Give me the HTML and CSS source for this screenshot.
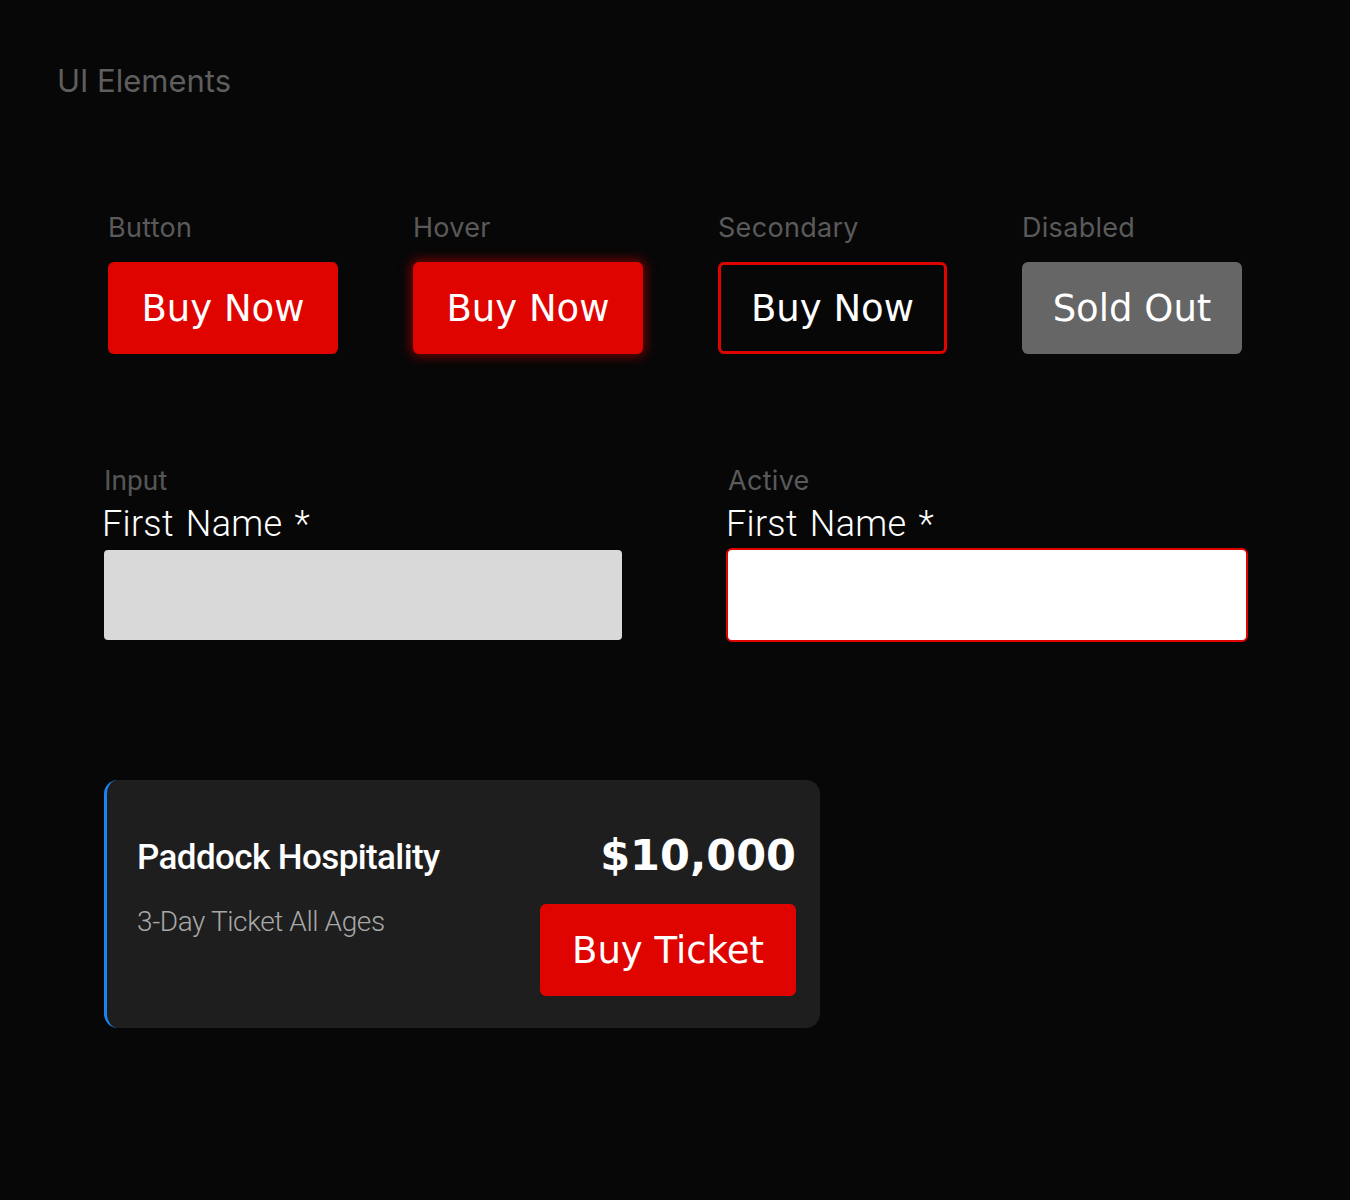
FILE: index.html
```html
<!DOCTYPE html>
<html lang="en">
<head>
<meta charset="utf-8">
<title>UI Elements</title>
<link rel="stylesheet" href="styles.css">
</head>
<body>
<main class="page">
  <h1 class="title">UI Elements</h1>

  <section class="buttons">
    <div class="btn-col">
      <span class="label">Button</span>
      <button class="btn btn-primary">Buy Now</button>
    </div>
    <div class="btn-col">
      <span class="label">Hover</span>
      <button class="btn btn-primary btn-hover">Buy Now</button>
    </div>
    <div class="btn-col">
      <span class="label">Secondary</span>
      <button class="btn btn-secondary">Buy Now</button>
    </div>
    <div class="btn-col">
      <span class="label">Disabled</span>
      <button class="btn btn-disabled">Sold Out</button>
    </div>
  </section>

  <section class="inputs">
    <div class="field">
      <span class="label label-alt">Input</span>
      <span class="field-name">First Name *</span>
      <div class="input-box"></div>
    </div>
    <div class="field">
      <span class="label label-active">Active</span>
      <span class="field-name">First Name *</span>
      <div class="input-box input-active"></div>
    </div>
  </section>

  <section class="card">
    <div class="card-info">
      <div class="card-title">Paddock Hospitality</div>
      <div class="card-sub">3-Day Ticket All Ages</div>
    </div>
    <div class="card-buy">
      <div class="price">$10,000</div>
      <button class="btn btn-primary btn-ticket">Buy Ticket</button>
    </div>
  </section>
</main>
</body>
</html>
```

FILE: styles.css
```css
* { box-sizing: border-box; }

html, body {
  margin: 0;
  background: #070707;
}

.page {
  padding-top: 62px;
  min-height: 1200px;
}

.title {
  margin: 0 0 0 57px;
  font-family: Inter, "Liberation Sans", sans-serif;
  font-weight: 400;
  font-size: 31px;
  line-height: 37px;
  color: #5e5e5e;
}

.buttons {
  margin: 113px 0 0 108px;
  display: flex;
  gap: 75px;
}

.btn-col {
  display: flex;
  flex-direction: column;
  gap: 18px;
}

.label {
  font-family: Inter, "Liberation Sans", sans-serif;
  font-size: 27px;
  line-height: 32px;
  letter-spacing: 0.3px;
  color: #5a5a5a;
  padding-left: 0;
}

.label-alt {
  font-family: Roboto, "Liberation Sans", sans-serif;
  font-weight: 400;
  font-size: 28px;
  letter-spacing: 0;
  color: #555555;
  padding-left: 2px;
}

.label-active {
  padding-left: 2px;
}

.btn {
  display: flex;
  align-items: center;
  justify-content: center;
  width: 230px;
  height: 92px;
  border: none;
  border-radius: 6px;
  padding: 0;
  font-family: "DejaVu Sans", sans-serif;
  font-size: 37px;
  font-weight: 400;
  color: #ffffff;
  cursor: pointer;
}

.btn-primary {
  background: #e00400;
}

.btn-hover {
  box-shadow: 0 0 12px 2px rgba(224, 4, 0, 0.55);
}

.btn-secondary {
  width: 229px;
  background: #070707;
  border: 3px solid #e00400;
}

.btn-disabled {
  width: 220px;
  background: #666666;
}

.inputs {
  margin: 111px 0 0 102px;
  display: grid;
  grid-template-columns: 522px 522px;
  column-gap: 102px;
}

.field {
  display: flex;
  flex-direction: column;
}

.field-name {
  margin-top: 7px;
  font-family: Roboto, "Liberation Sans", sans-serif;
  font-weight: 300;
  font-size: 36px;
  line-height: 40px;
  color: #ffffff;
  letter-spacing: 0.3px;
  word-spacing: 3px;
}

.input-box {
  margin: 6px 0 0 2px;
  width: 518px;
  height: 90px;
  background: #d9d9d9;
  border-radius: 4px;
}

.input-active {
  margin: 4px 0 -2px 0;
  width: 522px;
  height: 94px;
  background: #ffffff;
  border: 2px solid #e00400;
  border-radius: 6px;
}

.card {
  margin: 140px 0 0 104px;
  width: 716px;
  height: 248px;
  background: #1e1e1e;
  border-left: 3px solid #1a84f0;
  border-radius: 14px;
  padding: 0 24px 0 30px;
  display: flex;
  justify-content: space-between;
}

.card-info {
  padding-top: 57px;
  display: flex;
  flex-direction: column;
  gap: 26px;
}

.card-title {
  font-family: Roboto, "Liberation Sans", sans-serif;
  font-weight: 500;
  font-size: 35px;
  line-height: 42px;
  letter-spacing: -0.6px;
  color: #ffffff;
}

.card-sub {
  font-family: Roboto, "Liberation Sans", sans-serif;
  font-weight: 300;
  font-size: 28px;
  line-height: 34px;
  letter-spacing: -0.4px;
  color: #a8a8a8;
}

.card-buy {
  padding-top: 49px;
  display: flex;
  flex-direction: column;
  align-items: flex-end;
  gap: 23px;
}

.price {
  font-family: "DejaVu Sans", sans-serif;
  font-weight: 700;
  font-size: 43px;
  line-height: 52px;
  color: #ffffff;
}

.btn-ticket {
  width: 256px;
}
```
